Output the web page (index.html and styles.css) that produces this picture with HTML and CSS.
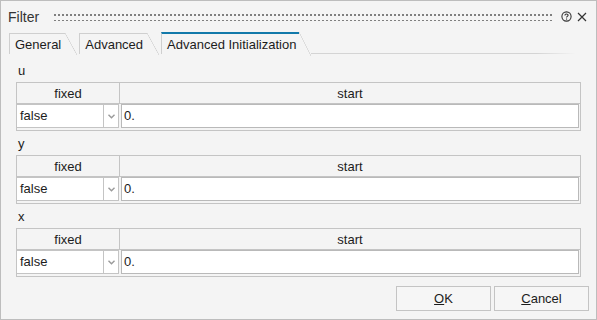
FILE: index.html
```html
<!DOCTYPE html>
<html lang="en">
<head>
  <meta charset="UTF-8">
  <title>Filter</title>
  <link rel="stylesheet" href="styles.css">
</head>
<body>
  <div class="window">
    <div class="titlebar">
      <div class="title">Filter</div>
      <div class="grip"></div>
      <svg class="help" width="11" height="11" viewBox="0 0 11 11">
        <circle cx="5.5" cy="5.5" r="4.6" fill="none" stroke="#333" stroke-width="1.1"/>
        <path d="M3.9 4.4 C3.9 2.6 7.1 2.6 7.1 4.3 C7.1 5.4 5.5 5.4 5.5 6.6" fill="none" stroke="#333" stroke-width="1.1"/>
        <rect x="5" y="7.5" width="1.1" height="1.1" fill="#333"/>
      </svg>
      <svg class="close" width="10" height="10" viewBox="0 0 10 10">
        <path d="M1 1 L9 9 M9 1 L1 9" stroke="#333" stroke-width="1.2"/>
      </svg>
    </div>

    <div class="tabs">
      <div class="tab">General</div>
      <div class="tab">Advanced</div>
      <div class="tab active">Advanced Initialization</div>
      <div class="tab-line"></div>
    </div>

    <div class="content">
      <div class="section">
        <div class="var-name">u</div>
        <div class="param-table">
          <div class="head">
            <div class="col-fixed">fixed</div>
            <div class="col-start">start</div>
          </div>
          <div class="row">
            <div class="select">
              <span class="value">false</span>
              <span class="arrow"><svg width="7" height="5" viewBox="0 0 7 5"><path d="M0.5 0.8 L3.5 3.8 L6.5 0.8" fill="none" stroke="#9a9a9a" stroke-width="1.4"/></svg></span>
            </div>
            <div class="input">0.</div>
          </div>
        </div>
      </div>

      <div class="section">
        <div class="var-name">y</div>
        <div class="param-table">
          <div class="head">
            <div class="col-fixed">fixed</div>
            <div class="col-start">start</div>
          </div>
          <div class="row">
            <div class="select">
              <span class="value">false</span>
              <span class="arrow"><svg width="7" height="5" viewBox="0 0 7 5"><path d="M0.5 0.8 L3.5 3.8 L6.5 0.8" fill="none" stroke="#9a9a9a" stroke-width="1.4"/></svg></span>
            </div>
            <div class="input">0.</div>
          </div>
        </div>
      </div>

      <div class="section">
        <div class="var-name">x</div>
        <div class="param-table">
          <div class="head">
            <div class="col-fixed">fixed</div>
            <div class="col-start">start</div>
          </div>
          <div class="row">
            <div class="select">
              <span class="value">false</span>
              <span class="arrow"><svg width="7" height="5" viewBox="0 0 7 5"><path d="M0.5 0.8 L3.5 3.8 L6.5 0.8" fill="none" stroke="#9a9a9a" stroke-width="1.4"/></svg></span>
            </div>
            <div class="input">0.</div>
          </div>
        </div>
      </div>
    </div>

    <div class="buttons">
      <div class="button"><u>O</u>K</div>
      <div class="button"><u>C</u>ancel</div>
    </div>
  </div>
</body>
</html>
```

FILE: styles.css
```css
* {
  box-sizing: border-box;
}

body {
  margin: 0;
  font-family: "Liberation Sans", Arial, sans-serif;
  font-size: 13px;
  color: #1c1c1c;
}

.window {
  width: 597px;
  height: 320px;
  background-color: #f4f4f4;
  border: 1px solid #bdbdbd;
  display: flex;
  flex-direction: column;
}

.titlebar {
  height: 29px;
  display: flex;
  align-items: center;
  padding: 0 9px 0 7px;
}

.title {
  font-size: 14px;
  color: #333;
  margin-top: 2px;
}

.grip {
  flex: 1;
  height: 8px;
  margin: 2px 8px 0 14px;
  background-image: radial-gradient(circle, #7f7f7f 1px, transparent 1.2px);
  background-size: 4px 6px;
  background-position: 0 -1px;
}

.help {
  margin: 2px 5px 0 0;
}

.close {
  margin-top: 2px;
}

.tabs {
  display: flex;
  align-items: flex-end;
  height: 23px;
  padding-left: 8px;
  margin-top: 1px;
}

.tab {
  position: relative;
  height: 21px;
  line-height: 21px;
  padding: 0 4px 0 5px;
  border-left: 1px solid #cfcfcf;
  border-top: 1px solid #cfcfcf;
  margin-right: 14px;
  color: #1c1c1c;
}

.tab::after {
  content: "";
  position: absolute;
  top: -1px;
  right: -12px;
  width: 12px;
  height: 22px;
  background: linear-gradient(to top right, transparent calc(50% - 0.6px), #cfcfcf 50%, transparent calc(50% + 0.6px));
}

.tab.active {
  height: 22px;
  border-top: 2px solid #1279aa;
  line-height: 21px;
  padding-right: 3px;
  margin-right: 12px;
}

.tab.active::after {
  top: -2px;
  height: 24px;
}

.tab-line {
  flex: 1;
  height: 1px;
  margin-right: 20px;
  background: linear-gradient(to right, #d4d4d4 85%, #f4f4f4);
}

.content {
  flex: 1;
  padding: 8px 15px 0 15px;
}

.section {
  margin-bottom: 4px;
}

.var-name {
  height: 18px;
  line-height: 18px;
  padding-left: 2px;
  margin-bottom: 2px;
}

.param-table {
  border: 1px solid #c4c4c4;
  height: 49px;
}

.head {
  display: flex;
  height: 21px;
  line-height: 21px;
  border-bottom: 1px solid #c4c4c4;
}

.col-fixed {
  width: 103px;
  text-align: center;
  border-right: 1px solid #c4c4c4;
}

.col-start {
  flex: 1;
  text-align: center;
}

.row {
  display: flex;
  height: 24px;
  padding: 0 1px 0 0;
  gap: 2px;
}

.select {
  width: 102px;
  display: flex;
  background-color: #fff;
  border: 1px solid #c4c4c4;
  border-left: none;
}

.select .value {
  flex: 1;
  padding-left: 3px;
  line-height: 22px;
}

.select .arrow {
  width: 15px;
  border-left: 1px solid #c4c4c4;
  display: flex;
  align-items: center;
  justify-content: center;
  padding-top: 1px;
}

.input {
  flex: 1;
  background-color: #fff;
  border: 1px solid #b9b9b9;
  padding-left: 2px;
  line-height: 22px;
}

.buttons {
  display: flex;
  justify-content: flex-end;
  gap: 3px;
  padding: 0 7px 8px 0;
}

.button {
  width: 95px;
  height: 25px;
  line-height: 23px;
  text-align: center;
  border: 1px solid #c4c4c4;
  background-color: #f6f6f6;
}
```
